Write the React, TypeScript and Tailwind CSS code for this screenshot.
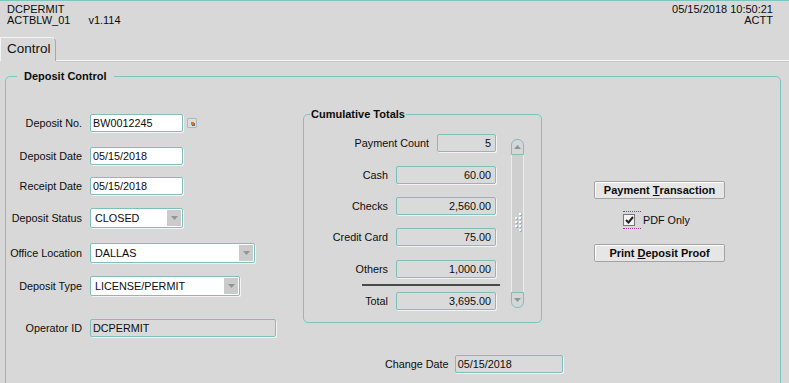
import React from 'react';

const Box = ({ className, children }: { className: string; children?: React.ReactNode }) => (
  <div className={'flex items-center border border-[#7fbfbb] rounded-[2px] shadow-[1px_1px_0_#f4f4f4] text-[10.8px] leading-none ' + className}>
    {children}
  </div>
);

const Arrow = () => (
  <div className="w-[14px] h-[16px] bg-[#cbcbcb] flex items-center justify-center">
    <svg width="7" height="4" viewBox="0 0 7 4"><path d="M0 0h7L3.5 4z" fill="#8c9796" /></svg>
  </div>
);

const Select = ({ className, value }: { className: string; value: string }) => (
  <Box className={'h-[20px] bg-white pl-[4px] pr-[1px] ' + className}>
    <span className="flex-1">{value}</span>
    <Arrow />
  </Box>
);

const Row = ({ label, mt, children }: { label: string; mt: string; children: React.ReactNode }) => (
  <div className={'flex items-center ' + mt}>
    <span className="w-[76px] text-right">{label}</span>
    <div className="ml-[8px] flex items-center">{children}</div>
  </div>
);

const Total = ({ label, value, mt, wide = true }: { label: string; value: string; mt: string; wide?: boolean }) => (
  <div className={'flex items-center justify-end pr-[4px] ' + mt}>
    <span>{label}</span>
    <Box className={(wide ? 'w-[100px] ml-[8px] ' : 'w-[59px] ml-[8px] ') + 'h-[18px] bg-[#dadada] justify-end pr-[4px]'}>{value}</Box>
  </div>
);

const Scrollbar = () => (
  <div className="ml-[11px] mt-[18px] w-[13px] h-[169px] flex flex-col">
    <div className="h-[16px] rounded-t-[6px] border border-[#7fbfbb] bg-[#d6d6d6] flex items-center justify-center">
      <svg width="7" height="4" viewBox="0 0 7 4"><path d="M3.5 0L7 4H0z" fill="#7e9c9a" /></svg>
    </div>
    <div className="flex-1 bg-[#cfcfcf] border-x border-[#ececec] flex items-center justify-center">
      <svg width="8" height="24" viewBox="0 0 8 24">
        {[[5, 1], [1, 5], [5, 5], [1, 9], [5, 9], [1, 13], [5, 13], [5, 17]].map(([x, y], i) => (
          <g key={i}>
            <rect x={x + 1} y={y + 1} width="2" height="2" fill="#7fbfbb" />
            <rect x={x} y={y} width="2" height="2" fill="#fff" />
          </g>
        ))}
      </svg>
    </div>
    <div className="h-[16px] rounded-b-[6px] border border-[#7fbfbb] bg-[#d6d6d6] flex items-center justify-center">
      <svg width="7" height="4" viewBox="0 0 7 4"><path d="M0 0h7L3.5 4z" fill="#7e9c9a" /></svg>
    </div>
  </div>
);

const Button = ({ children, mt }: { children: React.ReactNode; mt: string }) => (
  <div className={'w-[131px] h-[18px] bg-[#e6e6e6] border border-[#a3a3a3] rounded-[2px] shadow-[inset_1px_1px_0_#ffffff] flex items-center justify-center font-bold text-[11px] ' + mt}>
    {children}
  </div>
);

export default function App() {
  return (
    <div className="w-[789px] h-[383px] overflow-hidden bg-[#d8d8d8] border-t border-[#7cc4c0] font-['Liberation_Sans',Arial,sans-serif] text-[10.8px] text-[#0c0c0c]">
      {/* Header */}
      <div className="flex justify-between pl-[7px] pr-[16px] pt-[3px] leading-[11px] text-[11px]">
        <div>
          <div>DCPERMIT</div>
          <div>
            ACTBLW_01<span className="ml-[18px]">v1.114</span>
          </div>
        </div>
        <div className="text-right">
          <div>05/15/2018 10:50:21</div>
          <div>ACTT</div>
        </div>
      </div>

      {/* Tabs */}
      <div className="flex mt-[11px] h-[24px]">
        <div className="w-[56px] h-[24px] border-t border-l border-r border-t-[#f4f4f4] border-l-[#f4f4f4] border-r-[#a8a8a8] rounded-tr-[5px] flex items-center pl-[6px] text-[13.5px] text-[#111]">
          Control
        </div>
        <div className="flex-1 border-b border-[#f6f6f6] shadow-[0_1px_0_#c8c8c8]" />
      </div>

      {/* Deposit Control */}
      <fieldset className="ml-[5px] mt-[9px] w-[776px] h-[330px] border border-[#7cc4c0] rounded-[5px]">
        <legend className="ml-[11px] px-[7px] font-bold leading-[13px] text-[11px]">Deposit Control</legend>

        <div className="flex items-start">
          {/* Left form */}
          <div className="w-[297px]">
            <Row label="Deposit No." mt="mt-[31px]">
              <Box className="w-[93px] h-[18px] bg-white px-[2px]">BW0012245</Box>
              <div className="ml-[4px] w-[10px] h-[10px] bg-[#dcdcdc] border border-[#a9bcbb] rounded-[1px] flex items-center justify-center">
                <div className="w-[3px] h-[3px] bg-[#d9772f] shadow-[1px_1px_0_#3a76b8]" />
              </div>
            </Row>
            <Row label="Deposit Date" mt="mt-[15px]">
              <Box className="w-[93px] h-[18px] bg-white px-[2px]">05/15/2018</Box>
            </Row>
            <Row label="Receipt Date" mt="mt-[12px]">
              <Box className="w-[93px] h-[18px] bg-white px-[2px]">05/15/2018</Box>
            </Row>
            <Row label="Deposit Status" mt="mt-[13px]">
              <Select className="w-[93px]" value="CLOSED" />
            </Row>
            <Row label="Office Location" mt="mt-[15px]">
              <Select className="w-[165px]" value="DALLAS" />
            </Row>
            <Row label="Deposit Type" mt="mt-[13px]">
              <Select className="w-[150px]" value="LICENSE/PERMIT" />
            </Row>
            <Row label="Operator ID" mt="mt-[23px]">
              <Box className="w-[186px] h-[18px] bg-[#dadada] px-[2px]">DCPERMIT</Box>
            </Row>
          </div>

          {/* Cumulative Totals */}
          <fieldset className="mt-[25px] w-[239px] h-[215px] border border-[#7cc4c0] rounded-[5px]">
            <legend className="ml-[6px] px-[1px] font-bold leading-[13px] text-[11px]">Cumulative Totals</legend>
            <div className="flex items-start">
              <div className="w-[196px]">
                <Total label="Payment Count" value="5" mt="mt-[13px]" wide={false} />
                <Total label="Cash" value="60.00" mt="mt-[14px]" />
                <Total label="Checks" value="2,560.00" mt="mt-[13px]" />
                <Total label="Credit Card" value="75.00" mt="mt-[13px]" />
                <Total label="Others" value="1,000.00" mt="mt-[14px]" />
                <div className="ml-[58px] mt-[6px] h-[2px] bg-[#4a4a4a]" />
                <Total label="Total" value="3,695.00" mt="mt-[6px]" />
              </div>
              <Scrollbar />
            </div>
          </fieldset>

          {/* Actions */}
          <div className="ml-[52px] mt-[98px] flex flex-col">
            <Button mt="">
              Payment&nbsp;<span className="underline">T</span>ransaction
            </Button>
            <div className="flex items-center mt-[12px] ml-[29px]">
              <div className="w-[18px] py-[2px] border-y border-dotted border-[#9b3a9b]">
                <div className="w-[12px] h-[12px] bg-[#f2f2f2] border border-[#777] flex items-center justify-center">
                  <svg width="9" height="8" viewBox="0 0 9 8"><path d="M1 4l2.5 2.5L8 1" stroke="#222" strokeWidth="2" fill="none" /></svg>
                </div>
              </div>
              <span className="ml-[2px]">PDF Only</span>
            </div>
            <Button mt="mt-[15px]">
              Print&nbsp;<span className="underline">D</span>eposit Proof
            </Button>
          </div>
        </div>

        {/* Change Date */}
        <div className="flex items-center mt-[18px] pl-[379px]">
          <span>Change Date</span>
          <Box className="ml-[6px] w-[108px] h-[18px] bg-[#dadada] px-[2px]">05/15/2018</Box>
        </div>
      </fieldset>
    </div>
  );
}
